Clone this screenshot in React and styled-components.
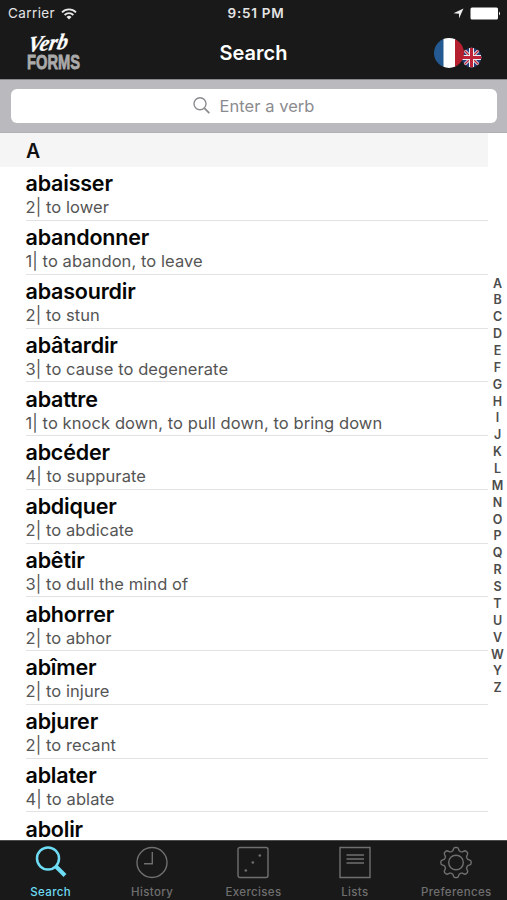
import styled, { createGlobalStyle } from "styled-components";

const GlobalStyle = createGlobalStyle`
  * {
    box-sizing: border-box;
  }

  body {
    margin: 0;
    background: #fff;
    font-family: Inter, "Liberation Sans", sans-serif;
  }
`;

const Screen = styled.div`
  width: 507px;
  height: 900px;
  display: flex;
  flex-direction: column;
  overflow: hidden;
  background: #fff;
`;

const Header = styled.header`
  flex: none;
  height: 79px;
  background: #191919;
  color: #fff;
`;

const StatusBar = styled.div`
  height: 27px;
  padding: 0 6px 0 8px;
  display: grid;
  grid-template-columns: 1fr auto 1fr;
  align-items: center;
  font-size: 13.5px;
  line-height: 27px;
  color: #e4e4e4;

  .carrier {
    display: flex;
    align-items: center;
    gap: 6px;
    letter-spacing: 0.4px;
  }

  .time {
    padding-left: 3px;
    font-weight: 600;
    letter-spacing: 0.75px;
  }

  .power {
    display: flex;
    align-items: center;
    justify-content: flex-end;
    gap: 6px;
  }
`;

const NavBar = styled.div`
  height: 52px;
  padding: 0 24px;
  display: grid;
  grid-template-columns: 1fr auto 1fr;
  align-items: center;

  h1 {
    margin: 0;
    font-size: 20px;
    font-weight: 600;
    line-height: 50px;
    letter-spacing: 0.05px;
  }

  svg {
    display: block;
    overflow: visible;
  }

  .flags {
    justify-self: end;
  }
`;

const SearchBar = styled.div`
  flex: none;
  height: 54px;
  padding: 10px 10px 10px 11px;
  background: #bab9be;
  border-top: 1px solid #88888c;
  border-bottom: 1px solid #b0afb4;
`;

const SearchField = styled.div`
  height: 34px;
  margin-top: -1px;
  padding-bottom: 1px;
  display: flex;
  align-items: center;
  justify-content: center;
  gap: 9px;
  border-radius: 6px;
  background: #fff;
  color: #8b8b8f;
  font-size: 16.5px;
  letter-spacing: 0.05px;
`;

const Content = styled.main`
  flex: 1;
  min-height: 0;
  display: flex;
  overflow: hidden;
`;

const List = styled.div`
  width: 488px;
`;

const SectionTitle = styled.h2`
  height: 34.3px;
  margin: 0;
  padding-left: 26px;
  background: #f5f5f6;
  color: #111;
  font-size: 19.5px;
  font-weight: 600;
  line-height: 37px;
`;

const Row = styled.div`
  height: 53.77px;
  margin-left: 25.5px;
  padding-top: 4.2px;
  border-bottom: 1px solid #e2e2e4;
  white-space: nowrap;
`;

const Verb = styled.div`
  color: #050505;
  font-size: 21.5px;
  font-weight: 600;
  line-height: 25px;
  letter-spacing: -0.2px;
`;

const Meaning = styled.div`
  color: #555;
  font-size: 16.5px;
  line-height: 22px;
  letter-spacing: 0.08px;
`;

const Index = styled.div`
  width: 19px;
  padding-top: 141.6px;
  display: flex;
  flex-direction: column;
  align-items: center;
  color: #4c4c4c;
  font-size: 12.5px;
  font-weight: 600;

  span {
    height: 16.86px;
    line-height: 17px;
  }
`;

const TabBar = styled.nav`
  flex: none;
  height: 60px;
  display: grid;
  grid-template-columns: repeat(5, 1fr);
  background: #191919;
  border-top: 1px solid #4b4d4d;
`;

const Tab = styled.div`
  display: flex;
  flex-direction: column;
  align-items: center;
  padding-top: 5px;
  color: ${({ $active }) => ($active ? "#6ddcf4" : "#6f6f6f")};
  font-size: 11.5px;
  font-weight: 500;
  letter-spacing: 0.35px;
  line-height: 16px;

  svg {
    display: block;
    margin-bottom: 5px;
  }
`;

const verbs = [
  ["abaisser", "2| to lower"],
  ["abandonner", "1| to abandon, to leave"],
  ["abasourdir", "2| to stun"],
  ["abâtardir", "3| to cause to degenerate"],
  ["abattre", "1| to knock down, to pull down, to bring down"],
  ["abcéder", "4| to suppurate"],
  ["abdiquer", "2| to abdicate"],
  ["abêtir", "3| to dull the mind of"],
  ["abhorrer", "2| to abhor"],
  ["abîmer", "2| to injure"],
  ["abjurer", "2| to recant"],
  ["ablater", "4| to ablate"],
  ["abolir", ""],
];

const letters = "ABCDEFGHIJKLMNOPQRSTUVWYZ".split("");

const Wifi = () => (
  <svg width="16" height="12" viewBox="0 0 16 12" fill="none" stroke="#e8e8e8" strokeWidth="1.8">
    <path d="M1 4.3a10 10 0 0 1 14 0" />
    <path d="M3.6 7a6.3 6.3 0 0 1 8.8 0" />
    <path d="M5.5 9a3.6 3.6 0 0 1 5 0L8 11.5z" fill="#e8e8e8" stroke="none" />
  </svg>
);

const Logo = () => (
  <svg width="60" height="40" viewBox="0 0 60 40">
    <g transform="translate(3 19) rotate(-5) skewX(-16)">
      <text
        x="0"
        y="0"
        textLength="40"
        lengthAdjust="spacingAndGlyphs"
        fontFamily="Liberation Serif, serif"
        fontStyle="italic"
        fontWeight="700"
        fontSize="22"
        fill="#fff"
        stroke="#fff"
        strokeWidth="0.3"
      >
        Verb
      </text>
    </g>
    <text
      x="3"
      y="35.5"
      textLength="53"
      lengthAdjust="spacingAndGlyphs"
      fontFamily="Liberation Sans, sans-serif"
      fontWeight="700"
      fontSize="21"
      fill="#aaa"
      stroke="#aaa"
      strokeWidth="0.8"
    >
      FORMS
    </text>
  </svg>
);

const Flags = () => (
  <svg className="flags" width="50" height="32" viewBox="0 0 50 32">
    <defs>
      <clipPath id="fr">
        <circle cx="16" cy="16" r="15" />
      </clipPath>
      <clipPath id="uk">
        <circle cx="38.5" cy="20.5" r="9.8" />
      </clipPath>
    </defs>
    <g clipPath="url(#uk)">
      <path d="M28 10h21v21H28z" fill="#263f7c" />
      <path d="M28 10l21 21M49 10L28 31" stroke="#eee" strokeWidth="3" />
      <path d="M28 10l21 21M49 10L28 31" stroke="#bd2339" strokeWidth="1.3" />
      <path d="M38.5 10v21M28 20.5h21" stroke="#eee" strokeWidth="5" />
      <path d="M38.5 10v21M28 20.5h21" stroke="#bd2339" strokeWidth="3" />
    </g>
    <g clipPath="url(#fr)">
      <path d="M0 0h11v32H0z" fill="#245a91" />
      <path d="M10.5 0h12v32h-12z" fill="#fff" />
      <path d="M22 0h10v32H22z" fill="#b5202f" />
    </g>
  </svg>
);

// outline of a cog with eight rounded teeth
const gearPoints = Array.from({ length: 96 }, (_, i) => {
  const angle = (i / 96) * Math.PI * 2;
  const radius = 13.5 + 1.7 * Math.tanh(2 * Math.cos(angle * 8));
  return `${(16 + radius * Math.cos(angle)).toFixed(2)},${(16.5 + radius * Math.sin(angle)).toFixed(2)}`;
}).join(" ");

const icons = {
  Search: (
    <g strokeWidth="2.5">
      <circle cx="13" cy="12.5" r="11" />
      <path d="M21 20.5l9 9" strokeWidth="4" />
    </g>
  ),
  History: (
    <>
      <circle cx="16" cy="16.5" r="15" />
      <path d="M16.3 6v11.8H8" />
    </>
  ),
  Exercises: (
    <>
      <rect x="1" y="1.5" width="30" height="30" rx="2" />
      <g fill="currentColor" stroke="none">
        <circle cx="8.8" cy="24.5" r="1.3" />
        <circle cx="15.8" cy="16.5" r="1.3" />
        <circle cx="22.8" cy="9.5" r="1.3" />
      </g>
    </>
  ),
  Lists: (
    <>
      <path d="M1 1.5h30v30H1z" />
      <path d="M7.5 9h17.5M7.5 13h17.5M7.5 17h17.5" />
    </>
  ),
  Preferences: (
    <>
      <circle cx="16" cy="16.5" r="7.3" />
      <polygon points={gearPoints} strokeLinejoin="round" />
    </>
  ),
};

const App = () => {
  return (
    <Screen>
      <GlobalStyle />
      <Header>
        <StatusBar>
          <div className="carrier">
            Carrier
            <Wifi />
          </div>
          <div className="time">9:51 PM</div>
          <div className="power">
            <svg width="11" height="11" viewBox="0 0 11 11">
              <path d="M10.5.5L6 10.5V5.8L.5 5.2z" fill="#eee" />
            </svg>
            <svg width="31" height="13" viewBox="0 0 31 13" fill="#fff">
              <rect x="0.5" y="0.5" width="27.5" height="12" rx="1.5" />
              <path d="M29 4.5q2 2 0 4z" />
            </svg>
          </div>
        </StatusBar>
        <NavBar>
          <Logo />
          <h1>Search</h1>
          <Flags />
        </NavBar>
      </Header>

      <SearchBar>
        <SearchField>
          <svg width="17" height="17" viewBox="0 0 17 17" fill="none" stroke="#8b8b8f" strokeWidth="1.4">
            <circle cx="7" cy="6.8" r="6" />
            <path d="M11.3 11.2l5 5" strokeWidth="1.8" />
          </svg>
          Enter a verb
        </SearchField>
      </SearchBar>

      <Content>
        <List>
          <SectionTitle>A</SectionTitle>
          {verbs.map(([verb, meaning]) => (
            <Row key={verb}>
              <Verb>{verb}</Verb>
              <Meaning>{meaning}</Meaning>
            </Row>
          ))}
        </List>
        <Index>
          {letters.map((letter) => (
            <span key={letter}>{letter}</span>
          ))}
        </Index>
      </Content>

      <TabBar>
        {Object.keys(icons).map((name) => (
          <Tab key={name} $active={name === "Search"}>
            <svg width="32" height="33" viewBox="0 0 32 33" fill="none" stroke="currentColor" strokeWidth="1.4">
              {icons[name]}
            </svg>
            {name}
          </Tab>
        ))}
      </TabBar>
    </Screen>
  );
};

export default App;
